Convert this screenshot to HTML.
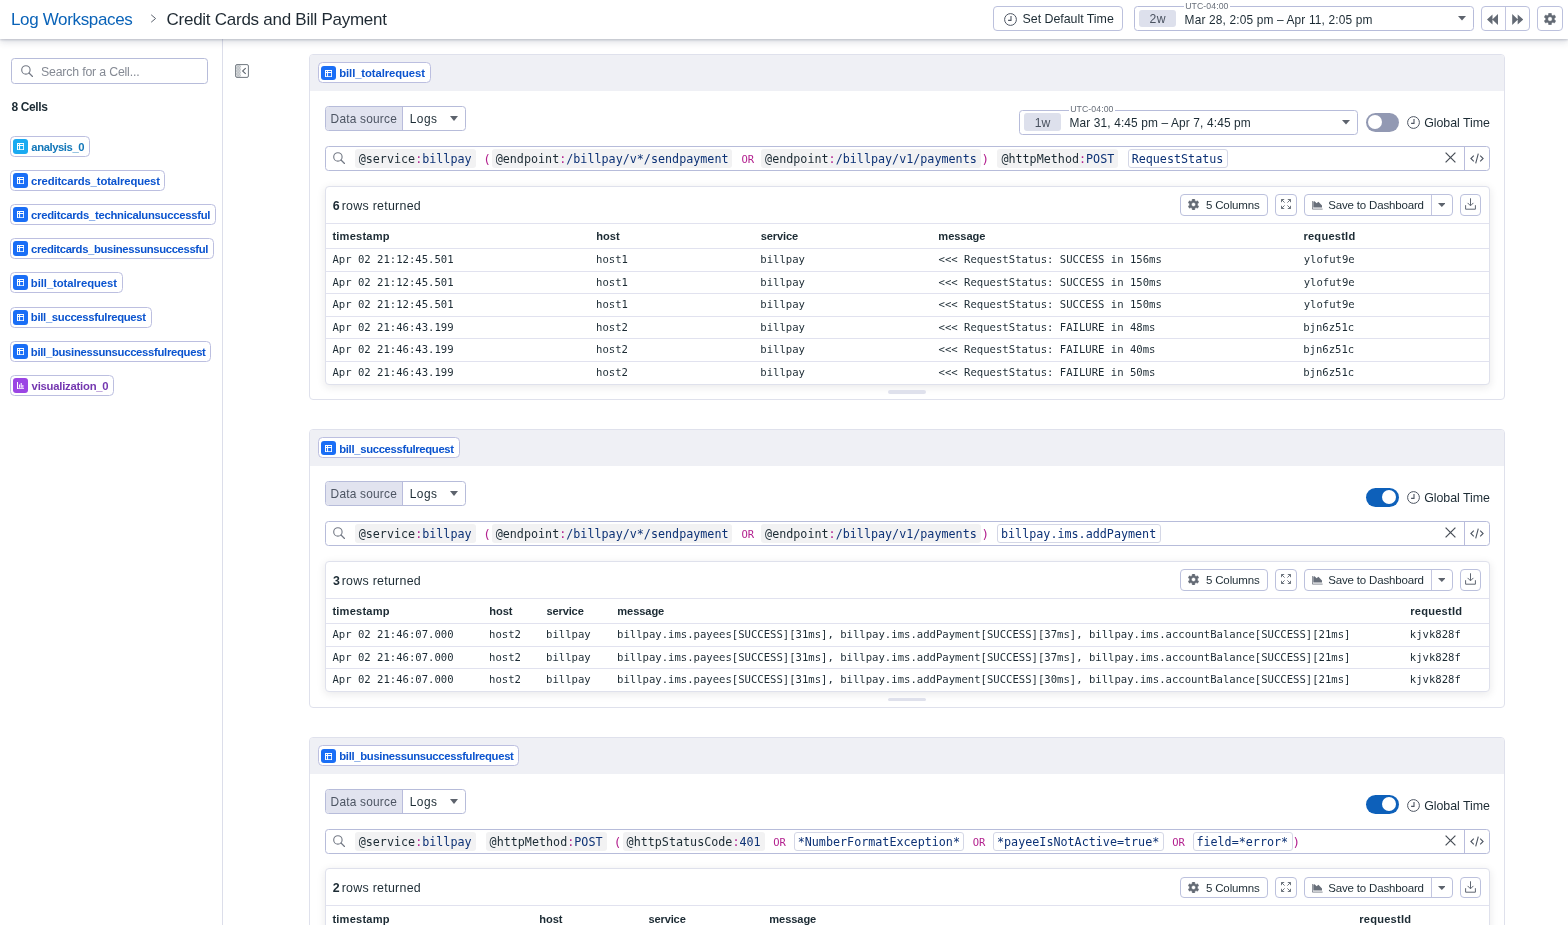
<!DOCTYPE html>
<html lang="en">
<head>
<meta charset="utf-8">
<title>Log Workspaces - Credit Cards and Bill Payment</title>
<style>
*{box-sizing:border-box;margin:0;padding:0}
html,body{width:1568px;height:925px;overflow:hidden;background:#fff}
body{font-family:"Liberation Sans","DejaVu Sans",sans-serif;color:#1c2b34;font-size:13px;position:relative}
.mono{font-family:"DejaVu Sans Mono","Liberation Mono",monospace}
#app{position:absolute;left:0;top:0;width:1568px;height:925px;overflow:hidden;will-change:transform}
.abs{position:absolute}
.t{position:absolute;white-space:pre;color:#1c2b34}
svg{display:block}
b{font-weight:700}
b.mg{font-weight:400;color:#b3218f}
.nv{color:#0d3276}
#hdr{position:absolute;left:0;top:0;width:1568px;height:39px;background:#fff;box-shadow:0 1px 2px rgba(40,50,80,.22),0 3px 7px rgba(40,50,80,.16);z-index:10}
#top{position:absolute;left:0;top:0;z-index:11}
.btn{border:1px solid #bcc1dd;border-radius:4px;background:#fff}
.inp{border:1px solid #b7bcda;border-radius:3.5px;background:#fff}
.tp{border:1px solid #b7bcda;border-radius:3.5px;background:#fff}
#side{position:absolute;left:0;top:39px;width:223px;height:886px;border-right:1px solid #dcdeea;background:#fff}
.chip{border:1px solid #bcbfe0;border-radius:4.5px;background:#fff}
.card{border:1px solid #dfe1ec;border-radius:4px;background:#fff}
.res{border:1px solid #dfe1ec;border-radius:4px;background:#fff;box-shadow:0 2px 8px rgba(30,30,40,.10)}
.hr{background:#e1e2ef}
</style>
</head>
<body>
<div id="app">
<div class="abs card" style="left:309px;top:54px;width:1196px;height:346px;"></div>
<div class="abs " style="left:310px;top:55px;width:1194px;height:35.6px;background:#eff0f5;border-radius:3px 3px 0 0"></div>
<div class="abs chip" style="left:318px;top:62.4px;width:112.5px;height:21px;"></div><div class="abs " style="left:321px;top:65.9px;width:15px;height:14.4px;border-radius:3px;background:#1a6ef6"></div><svg class="abs" style="left:324.8px;top:69.8px" width="7.2" height="7.2" viewBox="0 0 7 7"><path fill="#fff" fill-rule="evenodd" d="M0 0H7V7H0Z M1 1V2H2V1Z M3 1V2H6V1Z M1 3V6H2V3Z M3 3V6H6V3Z"/></svg><span class="t" style="left:339.25px;top:66.00px;font-size:11.3px;line-height:14px;letter-spacing:-0.100px;font-weight:700;color:#0b54cf">bill_totalrequest</span>
<div class="abs inp" style="left:325px;top:106px;width:141px;height:25px;"></div>
<div class="abs " style="left:326px;top:107px;width:76.5px;height:23px;background:#e1e3ef;border-right:1px solid #b9bcdc;border-radius:3px 0 0 3px"></div>
<span class="t" style="left:330.60px;top:111.00px;font-size:11.9px;line-height:16px;letter-spacing:0.210px;color:#4d5563">Data source</span>
<span class="t" style="left:409.80px;top:111.00px;font-size:11.9px;line-height:16px;letter-spacing:0.450px;color:#1c2b34">Logs</span>
<svg class="abs" style="left:450.1px;top:116.4px" width="8" height="5" viewBox="0 0 8 5"><path d="M0 0H8L4.0 5Z" fill="#5d636d"/></svg>
<div class="abs tp" style="left:1019px;top:110px;width:339px;height:25px;"></div><div class="abs " style="left:1024px;top:113.2px;width:37.4px;height:17.8px;border-radius:3px;background:#dde0ec"></div><span class="t" style="left:1034.70px;top:115.00px;font-size:12.2px;line-height:16px;letter-spacing:0.100px;color:#4a5260">1w</span><div class="abs " style="left:1069px;top:110px;width:45.5px;height:2px;background:#fff"></div><span class="t" style="left:1070.15px;top:103.00px;font-size:8.7px;line-height:12px;letter-spacing:0.100px;color:#676e79">UTC-04:00</span><span class="t" style="left:1069.50px;top:115.00px;font-size:11.9px;line-height:16px;letter-spacing:0.132px;color:#1c2b34">Mar 31, 4:45 pm – Apr 7, 4:45 pm</span><svg class="abs" style="left:1341.8px;top:120px" width="8" height="4.6" viewBox="0 0 8 4.6"><path d="M0 0H8L4.0 4.6Z" fill="#5d636d"/></svg>
<div class="abs " style="left:1366px;top:113px;width:33px;height:19px;border-radius:9.5px;background:#9299b3"></div>
<div class="abs " style="left:1368px;top:115.4px;width:14px;height:14px;border-radius:7px;background:#fff"></div>
<svg class="abs" style="left:1406.9px;top:115.9px" width="13" height="13" viewBox="0 0 13 13"><circle cx="6.5" cy="6.5" r="5.9" fill="none" stroke="#4d5562" stroke-width="1"/><path d="M7 2.9V7.4H4.1" fill="none" stroke="#4d5562" stroke-width="1.1"/></svg>
<span class="t" style="left:1424.20px;top:115.00px;font-size:12.4px;line-height:16px;letter-spacing:-0.040px;color:#1c2b34">Global Time</span>
<div class="abs inp" style="left:325px;top:146px;width:1165px;height:25px;"></div>
<svg class="abs" style="left:333.2px;top:151.6px" width="12" height="12" viewBox="0 0 12 12"><circle cx="4.9" cy="4.9" r="4.2" fill="none" stroke="#727884" stroke-width="1.1"/><path d="M8 8L11.5 11.5" stroke="#727884" stroke-width="1.2" stroke-linecap="round"/></svg>
<div class="abs " style="left:354.7px;top:149px;width:121.026768px;height:18.6px;border-radius:3px;background:#f2f2f3"></div><span class="t mono" style="left:358.70px;top:151.00px;font-size:11.73px;line-height:16px">@service<b class="mg">:</b><span class="nv">billpay</span></span><span class="t mono" style="left:483.20px;top:151.00px;font-size:12.6px;line-height:17px;color:#b3218f">(</span><div class="abs " style="left:491.7px;top:149px;width:240.692709px;height:18.6px;border-radius:3px;background:#f2f2f3"></div><span class="t mono" style="left:495.70px;top:151.00px;font-size:11.73px;line-height:16px">@endpoint<b class="mg">:</b><span class="nv">/billpay/v*/sendpayment</span></span><span class="t mono" style="left:741.50px;top:152.00px;font-size:10.5px;line-height:14px;color:#b3218f">OR</span><div class="abs " style="left:761.1px;top:149px;width:219.57519px;height:18.6px;border-radius:3px;background:#f2f2f3"></div><span class="t mono" style="left:765.10px;top:151.00px;font-size:11.73px;line-height:16px">@endpoint<b class="mg">:</b><span class="nv">/billpay/v1/payments</span></span><span class="t mono" style="left:981.45px;top:151.00px;font-size:12.6px;line-height:17px;color:#b3218f">)</span><div class="abs " style="left:997.4px;top:149px;width:121.026768px;height:18.6px;border-radius:3px;background:#f2f2f3"></div><span class="t mono" style="left:1001.40px;top:151.00px;font-size:11.73px;line-height:16px">@httpMethod<b class="mg">:</b><span class="nv">POST</span></span><div class="abs " style="left:1127.8000000000002px;top:149px;width:99.909249px;height:18.6px;border-radius:3px;background:#fff;border:1px solid #d4d7e6"></div><span class="t mono" style="left:1131.65px;top:151.00px;font-size:11.73px;line-height:16px;color:#0d3276">RequestStatus</span>
<svg class="abs" style="left:1445.2px;top:152.3px" width="11" height="11" viewBox="0 0 11 11"><path d="M0.6 0.6L10.4 10.4M10.4 0.6L0.6 10.4" stroke="#474e57" stroke-width="1.25" fill="none"/></svg>
<div class="abs " style="left:1464px;top:147px;width:1px;height:23px;background:#b9bcdc"></div>
<svg class="abs" style="left:1470px;top:152.5px" width="14" height="11" viewBox="0 0 14 11"><path d="M3.8 2.6L0.9 5.5L3.8 8.4M10.2 2.6L13.1 5.5L10.2 8.4M8.3 0.6L5.7 10.4" stroke="#4d5562" stroke-width="1.1" fill="none"/></svg>
<div class="abs res" style="left:325px;top:186px;width:1165px;height:198.6px;"></div>
<span class="t" style="left:332.80px;top:198.00px;font-size:12.4px;line-height:16px;font-weight:700;color:#1c2b34">6</span>
<span class="t" style="left:341.65px;top:198.00px;font-size:12.4px;line-height:16px;letter-spacing:0.279px;color:#1c2b34">rows returned</span>
<div class="abs btn" style="left:1180px;top:194px;width:88px;height:22px;"></div>
<svg class="abs" style="left:1188.3px;top:199.2px" width="11" height="11" viewBox="0 0 12 12"><path d="M7.53 10.07 L7.25 11.87 L4.75 11.87 L4.47 10.07 L3.24 9.36 L1.54 10.02 L0.29 7.85 L1.71 6.71 L1.71 5.29 L0.29 4.15 L1.54 1.98 L3.24 2.64 L4.47 1.93 L4.75 0.13 L7.25 0.13 L7.53 1.93 L8.76 2.64 L10.46 1.98 L11.71 4.15 L10.29 5.29 L10.29 6.71 L11.71 7.85 L10.46 10.02 L8.76 9.36Z M6 3.75 A2.25 2.25 0 1 0 6 8.25 A2.25 2.25 0 1 0 6 3.75Z" fill="#636a74" fill-rule="evenodd" stroke="#636a74" stroke-width="0.5" stroke-linejoin="round"/></svg>
<span class="t" style="left:1205.90px;top:198.00px;font-size:11.5px;line-height:14px;letter-spacing:-0.138px;color:#1c2b34">5 Columns</span>
<div class="abs btn" style="left:1275px;top:194px;width:22px;height:22px;"></div>
<svg class="abs" style="left:1281px;top:199.3px" width="10" height="10" viewBox="0 0 10 10"><path d="M0.5 3.2V0.5H3.2M0.5 0.5L3.6 3.6M6.8 0.5H9.5V3.2M9.5 0.5L6.4 3.6M0.5 6.8V9.5H3.2M0.5 9.5L3.6 6.4M9.5 6.8V9.5H6.8M9.5 9.5L6.4 6.4" stroke="#5f6671" stroke-width="0.9" fill="none"/></svg>
<div class="abs btn" style="left:1304px;top:194px;width:149px;height:22px;"></div>
<svg class="abs" style="left:1312px;top:200.5px" width="11" height="9" viewBox="0 0 11 9"><path d="M0.4 0V8.1H10.6" stroke="#686f7a" stroke-width="0.8" fill="none"/><path d="M1.3 6.6V0.4L2.6 0.2L4.6 2.3L6.4 0.8L10 4.6V6.6Z" fill="#686f7a"/></svg>
<span class="t" style="left:1328.20px;top:198.00px;font-size:11.5px;line-height:14px;letter-spacing:-0.166px;color:#1c2b34">Save to Dashboard</span>
<div class="abs " style="left:1431px;top:195px;width:1px;height:20px;background:#c3c6e0"></div>
<svg class="abs" style="left:1437.8px;top:203.3px" width="7.6" height="4" viewBox="0 0 7.6 4"><path d="M0 0H7.6L3.8 4Z" fill="#5d636d"/></svg>
<div class="abs btn" style="left:1460px;top:194px;width:21px;height:22px;"></div>
<svg class="abs" style="left:1464.9px;top:198.2px" width="11" height="12" viewBox="0 0 11 12"><path d="M5.5 0.3V7.6M2.6 4.9L5.5 7.8L8.4 4.9M0.6 7.2V11.2H10.4V7.2" stroke="#5f6671" stroke-width="1" fill="none"/></svg>
<div class="abs hr" style="left:326px;top:223.2px;width:1163px;height:1px;"></div>
<div class="abs hr" style="left:326px;top:248px;width:1163px;height:1px;"></div>
<span class="t" style="left:332.45px;top:229.00px;font-size:11.1px;line-height:14px;letter-spacing:0.194px;font-weight:700;color:#1c2b34">timestamp</span>
<span class="t" style="left:596.35px;top:229.00px;font-size:11.1px;line-height:14px;letter-spacing:-0.033px;font-weight:700;color:#1c2b34">host</span>
<span class="t" style="left:760.80px;top:229.00px;font-size:11.1px;line-height:14px;letter-spacing:-0.158px;font-weight:700;color:#1c2b34">service</span>
<span class="t" style="left:938.35px;top:229.00px;font-size:11.1px;line-height:14px;letter-spacing:-0.075px;font-weight:700;color:#1c2b34">message</span>
<span class="t" style="left:1303.45px;top:229.00px;font-size:11.1px;line-height:14px;letter-spacing:0.225px;font-weight:700;color:#1c2b34">requestId</span>
<span class="t mono" style="left:332.45px;top:252.00px;font-size:10.6px;line-height:15px;color:#1c2b34">Apr 02 21:12:45.501</span>
<span class="t mono" style="left:596.10px;top:252.00px;font-size:10.6px;line-height:15px;color:#1c2b34">host1</span>
<span class="t mono" style="left:760.30px;top:252.00px;font-size:10.6px;line-height:15px;color:#1c2b34">billpay</span>
<span class="t mono" style="left:938.60px;top:252.00px;font-size:10.6px;line-height:15px;color:#1c2b34">&lt;&lt;&lt; RequestStatus: SUCCESS in 156ms</span>
<span class="t mono" style="left:1303.70px;top:252.00px;font-size:10.6px;line-height:15px;color:#1c2b34">ylofut9e</span>
<div class="abs hr" style="left:326px;top:270.6px;width:1163px;height:1px;"></div>
<span class="t mono" style="left:332.45px;top:275.00px;font-size:10.6px;line-height:15px;color:#1c2b34">Apr 02 21:12:45.501</span>
<span class="t mono" style="left:596.10px;top:275.00px;font-size:10.6px;line-height:15px;color:#1c2b34">host1</span>
<span class="t mono" style="left:760.30px;top:275.00px;font-size:10.6px;line-height:15px;color:#1c2b34">billpay</span>
<span class="t mono" style="left:938.60px;top:275.00px;font-size:10.6px;line-height:15px;color:#1c2b34">&lt;&lt;&lt; RequestStatus: SUCCESS in 150ms</span>
<span class="t mono" style="left:1303.70px;top:275.00px;font-size:10.6px;line-height:15px;color:#1c2b34">ylofut9e</span>
<div class="abs hr" style="left:326px;top:293.2px;width:1163px;height:1px;"></div>
<span class="t mono" style="left:332.45px;top:297.00px;font-size:10.6px;line-height:15px;color:#1c2b34">Apr 02 21:12:45.501</span>
<span class="t mono" style="left:596.10px;top:297.00px;font-size:10.6px;line-height:15px;color:#1c2b34">host1</span>
<span class="t mono" style="left:760.30px;top:297.00px;font-size:10.6px;line-height:15px;color:#1c2b34">billpay</span>
<span class="t mono" style="left:938.60px;top:297.00px;font-size:10.6px;line-height:15px;color:#1c2b34">&lt;&lt;&lt; RequestStatus: SUCCESS in 150ms</span>
<span class="t mono" style="left:1303.70px;top:297.00px;font-size:10.6px;line-height:15px;color:#1c2b34">ylofut9e</span>
<div class="abs hr" style="left:326px;top:315.8px;width:1163px;height:1px;"></div>
<span class="t mono" style="left:332.45px;top:320.00px;font-size:10.6px;line-height:15px;color:#1c2b34">Apr 02 21:46:43.199</span>
<span class="t mono" style="left:596.10px;top:320.00px;font-size:10.6px;line-height:15px;color:#1c2b34">host2</span>
<span class="t mono" style="left:760.30px;top:320.00px;font-size:10.6px;line-height:15px;color:#1c2b34">billpay</span>
<span class="t mono" style="left:938.60px;top:320.00px;font-size:10.6px;line-height:15px;color:#1c2b34">&lt;&lt;&lt; RequestStatus: FAILURE in 48ms</span>
<span class="t mono" style="left:1303.20px;top:320.00px;font-size:10.6px;line-height:15px;color:#1c2b34">bjn6z51c</span>
<div class="abs hr" style="left:326px;top:338.4px;width:1163px;height:1px;"></div>
<span class="t mono" style="left:332.45px;top:342.00px;font-size:10.6px;line-height:15px;color:#1c2b34">Apr 02 21:46:43.199</span>
<span class="t mono" style="left:596.10px;top:342.00px;font-size:10.6px;line-height:15px;color:#1c2b34">host2</span>
<span class="t mono" style="left:760.30px;top:342.00px;font-size:10.6px;line-height:15px;color:#1c2b34">billpay</span>
<span class="t mono" style="left:938.60px;top:342.00px;font-size:10.6px;line-height:15px;color:#1c2b34">&lt;&lt;&lt; RequestStatus: FAILURE in 40ms</span>
<span class="t mono" style="left:1303.20px;top:342.00px;font-size:10.6px;line-height:15px;color:#1c2b34">bjn6z51c</span>
<div class="abs hr" style="left:326px;top:361.0px;width:1163px;height:1px;"></div>
<span class="t mono" style="left:332.45px;top:365.00px;font-size:10.6px;line-height:15px;color:#1c2b34">Apr 02 21:46:43.199</span>
<span class="t mono" style="left:596.10px;top:365.00px;font-size:10.6px;line-height:15px;color:#1c2b34">host2</span>
<span class="t mono" style="left:760.30px;top:365.00px;font-size:10.6px;line-height:15px;color:#1c2b34">billpay</span>
<span class="t mono" style="left:938.60px;top:365.00px;font-size:10.6px;line-height:15px;color:#1c2b34">&lt;&lt;&lt; RequestStatus: FAILURE in 50ms</span>
<span class="t mono" style="left:1303.20px;top:365.00px;font-size:10.6px;line-height:15px;color:#1c2b34">bjn6z51c</span>
<div class="abs " style="left:888px;top:390.2px;width:38px;height:3.6px;border-radius:2px;background:#dfe1ec"></div>
<div class="abs card" style="left:309px;top:429px;width:1196px;height:278.5px;"></div>
<div class="abs " style="left:310px;top:430px;width:1194px;height:35.6px;background:#eff0f5;border-radius:3px 3px 0 0"></div>
<div class="abs chip" style="left:318px;top:437.4px;width:141.6px;height:21px;"></div><div class="abs " style="left:321px;top:440.9px;width:15px;height:14.4px;border-radius:3px;background:#1a6ef6"></div><svg class="abs" style="left:324.8px;top:444.79999999999995px" width="7.2" height="7.2" viewBox="0 0 7 7"><path fill="#fff" fill-rule="evenodd" d="M0 0H7V7H0Z M1 1V2H2V1Z M3 1V2H6V1Z M1 3V6H2V3Z M3 3V6H6V3Z"/></svg><span class="t" style="left:339.25px;top:442.00px;font-size:11.3px;line-height:14px;letter-spacing:-0.333px;font-weight:700;color:#0b54cf">bill_successfulrequest</span>
<div class="abs inp" style="left:325px;top:481px;width:141px;height:25px;"></div>
<div class="abs " style="left:326px;top:482px;width:76.5px;height:23px;background:#e1e3ef;border-right:1px solid #b9bcdc;border-radius:3px 0 0 3px"></div>
<span class="t" style="left:330.60px;top:486.00px;font-size:11.9px;line-height:16px;letter-spacing:0.210px;color:#4d5563">Data source</span>
<span class="t" style="left:409.80px;top:486.00px;font-size:11.9px;line-height:16px;letter-spacing:0.450px;color:#1c2b34">Logs</span>
<svg class="abs" style="left:450.1px;top:491.4px" width="8" height="5" viewBox="0 0 8 5"><path d="M0 0H8L4.0 5Z" fill="#5d636d"/></svg>
<div class="abs " style="left:1366px;top:488px;width:33px;height:19px;border-radius:9.5px;background:#0d60ba"></div>
<div class="abs " style="left:1382.4px;top:490.4px;width:14px;height:14px;border-radius:7px;background:#fff"></div>
<svg class="abs" style="left:1406.9px;top:490.9px" width="13" height="13" viewBox="0 0 13 13"><circle cx="6.5" cy="6.5" r="5.9" fill="none" stroke="#4d5562" stroke-width="1"/><path d="M7 2.9V7.4H4.1" fill="none" stroke="#4d5562" stroke-width="1.1"/></svg>
<span class="t" style="left:1424.20px;top:490.00px;font-size:12.4px;line-height:16px;letter-spacing:-0.040px;color:#1c2b34">Global Time</span>
<div class="abs inp" style="left:325px;top:521px;width:1165px;height:25px;"></div>
<svg class="abs" style="left:333.2px;top:526.6px" width="12" height="12" viewBox="0 0 12 12"><circle cx="4.9" cy="4.9" r="4.2" fill="none" stroke="#727884" stroke-width="1.1"/><path d="M8 8L11.5 11.5" stroke="#727884" stroke-width="1.2" stroke-linecap="round"/></svg>
<div class="abs " style="left:354.7px;top:524px;width:121.026768px;height:18.6px;border-radius:3px;background:#f2f2f3"></div><span class="t mono" style="left:358.70px;top:526.00px;font-size:11.73px;line-height:16px">@service<b class="mg">:</b><span class="nv">billpay</span></span><span class="t mono" style="left:483.20px;top:526.00px;font-size:12.6px;line-height:17px;color:#b3218f">(</span><div class="abs " style="left:491.7px;top:524px;width:240.692709px;height:18.6px;border-radius:3px;background:#f2f2f3"></div><span class="t mono" style="left:495.70px;top:526.00px;font-size:11.73px;line-height:16px">@endpoint<b class="mg">:</b><span class="nv">/billpay/v*/sendpayment</span></span><span class="t mono" style="left:741.50px;top:527.00px;font-size:10.5px;line-height:14px;color:#b3218f">OR</span><div class="abs " style="left:761.1px;top:524px;width:219.57519px;height:18.6px;border-radius:3px;background:#f2f2f3"></div><span class="t mono" style="left:765.10px;top:526.00px;font-size:11.73px;line-height:16px">@endpoint<b class="mg">:</b><span class="nv">/billpay/v1/payments</span></span><span class="t mono" style="left:981.45px;top:526.00px;font-size:12.6px;line-height:17px;color:#b3218f">)</span><div class="abs " style="left:997.4px;top:524px;width:163.261806px;height:18.6px;border-radius:3px;background:#fff;border:1px solid #d4d7e6"></div><span class="t mono" style="left:1001.00px;top:526.00px;font-size:11.73px;line-height:16px;color:#0d3276">billpay.ims.addPayment</span>
<svg class="abs" style="left:1445.2px;top:527.3px" width="11" height="11" viewBox="0 0 11 11"><path d="M0.6 0.6L10.4 10.4M10.4 0.6L0.6 10.4" stroke="#474e57" stroke-width="1.25" fill="none"/></svg>
<div class="abs " style="left:1464px;top:522px;width:1px;height:23px;background:#b9bcdc"></div>
<svg class="abs" style="left:1470px;top:527.5px" width="14" height="11" viewBox="0 0 14 11"><path d="M3.8 2.6L0.9 5.5L3.8 8.4M10.2 2.6L13.1 5.5L10.2 8.4M8.3 0.6L5.7 10.4" stroke="#4d5562" stroke-width="1.1" fill="none"/></svg>
<div class="abs res" style="left:325px;top:561px;width:1165px;height:130.8px;"></div>
<span class="t" style="left:333.05px;top:573.00px;font-size:12.4px;line-height:16px;font-weight:700;color:#1c2b34">3</span>
<span class="t" style="left:341.65px;top:573.00px;font-size:12.4px;line-height:16px;letter-spacing:0.279px;color:#1c2b34">rows returned</span>
<div class="abs btn" style="left:1180px;top:569px;width:88px;height:22px;"></div>
<svg class="abs" style="left:1188.3px;top:574.2px" width="11" height="11" viewBox="0 0 12 12"><path d="M7.53 10.07 L7.25 11.87 L4.75 11.87 L4.47 10.07 L3.24 9.36 L1.54 10.02 L0.29 7.85 L1.71 6.71 L1.71 5.29 L0.29 4.15 L1.54 1.98 L3.24 2.64 L4.47 1.93 L4.75 0.13 L7.25 0.13 L7.53 1.93 L8.76 2.64 L10.46 1.98 L11.71 4.15 L10.29 5.29 L10.29 6.71 L11.71 7.85 L10.46 10.02 L8.76 9.36Z M6 3.75 A2.25 2.25 0 1 0 6 8.25 A2.25 2.25 0 1 0 6 3.75Z" fill="#636a74" fill-rule="evenodd" stroke="#636a74" stroke-width="0.5" stroke-linejoin="round"/></svg>
<span class="t" style="left:1205.90px;top:573.00px;font-size:11.5px;line-height:14px;letter-spacing:-0.138px;color:#1c2b34">5 Columns</span>
<div class="abs btn" style="left:1275px;top:569px;width:22px;height:22px;"></div>
<svg class="abs" style="left:1281px;top:574.3px" width="10" height="10" viewBox="0 0 10 10"><path d="M0.5 3.2V0.5H3.2M0.5 0.5L3.6 3.6M6.8 0.5H9.5V3.2M9.5 0.5L6.4 3.6M0.5 6.8V9.5H3.2M0.5 9.5L3.6 6.4M9.5 6.8V9.5H6.8M9.5 9.5L6.4 6.4" stroke="#5f6671" stroke-width="0.9" fill="none"/></svg>
<div class="abs btn" style="left:1304px;top:569px;width:149px;height:22px;"></div>
<svg class="abs" style="left:1312px;top:575.5px" width="11" height="9" viewBox="0 0 11 9"><path d="M0.4 0V8.1H10.6" stroke="#686f7a" stroke-width="0.8" fill="none"/><path d="M1.3 6.6V0.4L2.6 0.2L4.6 2.3L6.4 0.8L10 4.6V6.6Z" fill="#686f7a"/></svg>
<span class="t" style="left:1328.20px;top:573.00px;font-size:11.5px;line-height:14px;letter-spacing:-0.166px;color:#1c2b34">Save to Dashboard</span>
<div class="abs " style="left:1431px;top:570px;width:1px;height:20px;background:#c3c6e0"></div>
<svg class="abs" style="left:1437.8px;top:578.3px" width="7.6" height="4" viewBox="0 0 7.6 4"><path d="M0 0H7.6L3.8 4Z" fill="#5d636d"/></svg>
<div class="abs btn" style="left:1460px;top:569px;width:21px;height:22px;"></div>
<svg class="abs" style="left:1464.9px;top:573.2px" width="11" height="12" viewBox="0 0 11 12"><path d="M5.5 0.3V7.6M2.6 4.9L5.5 7.8L8.4 4.9M0.6 7.2V11.2H10.4V7.2" stroke="#5f6671" stroke-width="1" fill="none"/></svg>
<div class="abs hr" style="left:326px;top:598.2px;width:1163px;height:1px;"></div>
<div class="abs hr" style="left:326px;top:623px;width:1163px;height:1px;"></div>
<span class="t" style="left:332.45px;top:604.00px;font-size:11.1px;line-height:14px;letter-spacing:0.194px;font-weight:700;color:#1c2b34">timestamp</span>
<span class="t" style="left:489.25px;top:604.00px;font-size:11.1px;line-height:14px;letter-spacing:-0.033px;font-weight:700;color:#1c2b34">host</span>
<span class="t" style="left:546.50px;top:604.00px;font-size:11.1px;line-height:14px;letter-spacing:-0.158px;font-weight:700;color:#1c2b34">service</span>
<span class="t" style="left:617.25px;top:604.00px;font-size:11.1px;line-height:14px;letter-spacing:-0.075px;font-weight:700;color:#1c2b34">message</span>
<span class="t" style="left:1410.25px;top:604.00px;font-size:11.1px;line-height:14px;letter-spacing:0.225px;font-weight:700;color:#1c2b34">requestId</span>
<span class="t mono" style="left:332.45px;top:627.00px;font-size:10.6px;line-height:15px;color:#1c2b34">Apr 02 21:46:07.000</span>
<span class="t mono" style="left:489.00px;top:627.00px;font-size:10.6px;line-height:15px;color:#1c2b34">host2</span>
<span class="t mono" style="left:546.00px;top:627.00px;font-size:10.6px;line-height:15px;color:#1c2b34">billpay</span>
<span class="t mono" style="left:617.00px;top:627.00px;font-size:10.6px;line-height:15px;color:#1c2b34">billpay.ims.payees[SUCCESS][31ms], billpay.ims.addPayment[SUCCESS][37ms], billpay.ims.accountBalance[SUCCESS][21ms]</span>
<span class="t mono" style="left:1409.75px;top:627.00px;font-size:10.6px;line-height:15px;color:#1c2b34">kjvk828f</span>
<div class="abs hr" style="left:326px;top:645.6px;width:1163px;height:1px;"></div>
<span class="t mono" style="left:332.45px;top:650.00px;font-size:10.6px;line-height:15px;color:#1c2b34">Apr 02 21:46:07.000</span>
<span class="t mono" style="left:489.00px;top:650.00px;font-size:10.6px;line-height:15px;color:#1c2b34">host2</span>
<span class="t mono" style="left:546.00px;top:650.00px;font-size:10.6px;line-height:15px;color:#1c2b34">billpay</span>
<span class="t mono" style="left:617.00px;top:650.00px;font-size:10.6px;line-height:15px;color:#1c2b34">billpay.ims.payees[SUCCESS][31ms], billpay.ims.addPayment[SUCCESS][37ms], billpay.ims.accountBalance[SUCCESS][21ms]</span>
<span class="t mono" style="left:1409.75px;top:650.00px;font-size:10.6px;line-height:15px;color:#1c2b34">kjvk828f</span>
<div class="abs hr" style="left:326px;top:668.2px;width:1163px;height:1px;"></div>
<span class="t mono" style="left:332.45px;top:672.00px;font-size:10.6px;line-height:15px;color:#1c2b34">Apr 02 21:46:07.000</span>
<span class="t mono" style="left:489.00px;top:672.00px;font-size:10.6px;line-height:15px;color:#1c2b34">host2</span>
<span class="t mono" style="left:546.00px;top:672.00px;font-size:10.6px;line-height:15px;color:#1c2b34">billpay</span>
<span class="t mono" style="left:617.00px;top:672.00px;font-size:10.6px;line-height:15px;color:#1c2b34">billpay.ims.payees[SUCCESS][31ms], billpay.ims.addPayment[SUCCESS][30ms], billpay.ims.accountBalance[SUCCESS][21ms]</span>
<span class="t mono" style="left:1409.75px;top:672.00px;font-size:10.6px;line-height:15px;color:#1c2b34">kjvk828f</span>
<div class="abs " style="left:888px;top:697.7px;width:38px;height:3.6px;border-radius:2px;background:#dfe1ec"></div>
<div class="abs card" style="left:309px;top:737px;width:1196px;height:256px;"></div>
<div class="abs " style="left:310px;top:738px;width:1194px;height:35.6px;background:#eff0f5;border-radius:3px 3px 0 0"></div>
<div class="abs chip" style="left:318px;top:745.4px;width:200.6px;height:21px;"></div><div class="abs " style="left:321px;top:748.9px;width:15px;height:14.4px;border-radius:3px;background:#1a6ef6"></div><svg class="abs" style="left:324.8px;top:752.8px" width="7.2" height="7.2" viewBox="0 0 7 7"><path fill="#fff" fill-rule="evenodd" d="M0 0H7V7H0Z M1 1V2H2V1Z M3 1V2H6V1Z M1 3V6H2V3Z M3 3V6H6V3Z"/></svg><span class="t" style="left:339.25px;top:749.00px;font-size:11.3px;line-height:14px;letter-spacing:-0.321px;font-weight:700;color:#0b54cf">bill_businessunsuccessfulrequest</span>
<div class="abs inp" style="left:325px;top:789px;width:141px;height:25px;"></div>
<div class="abs " style="left:326px;top:790px;width:76.5px;height:23px;background:#e1e3ef;border-right:1px solid #b9bcdc;border-radius:3px 0 0 3px"></div>
<span class="t" style="left:330.60px;top:794.00px;font-size:11.9px;line-height:16px;letter-spacing:0.210px;color:#4d5563">Data source</span>
<span class="t" style="left:409.80px;top:794.00px;font-size:11.9px;line-height:16px;letter-spacing:0.450px;color:#1c2b34">Logs</span>
<svg class="abs" style="left:450.1px;top:799.4px" width="8" height="5" viewBox="0 0 8 5"><path d="M0 0H8L4.0 5Z" fill="#5d636d"/></svg>
<div class="abs " style="left:1366px;top:795px;width:33px;height:19px;border-radius:9.5px;background:#0d60ba"></div>
<div class="abs " style="left:1382.4px;top:797.4px;width:14px;height:14px;border-radius:7px;background:#fff"></div>
<svg class="abs" style="left:1406.9px;top:798.9px" width="13" height="13" viewBox="0 0 13 13"><circle cx="6.5" cy="6.5" r="5.9" fill="none" stroke="#4d5562" stroke-width="1"/><path d="M7 2.9V7.4H4.1" fill="none" stroke="#4d5562" stroke-width="1.1"/></svg>
<span class="t" style="left:1424.20px;top:798.00px;font-size:12.4px;line-height:16px;letter-spacing:-0.040px;color:#1c2b34">Global Time</span>
<div class="abs inp" style="left:325px;top:829px;width:1165px;height:25px;"></div>
<svg class="abs" style="left:333.2px;top:834.6px" width="12" height="12" viewBox="0 0 12 12"><circle cx="4.9" cy="4.9" r="4.2" fill="none" stroke="#727884" stroke-width="1.1"/><path d="M8 8L11.5 11.5" stroke="#727884" stroke-width="1.2" stroke-linecap="round"/></svg>
<div class="abs " style="left:354.7px;top:832px;width:121.026768px;height:18.6px;border-radius:3px;background:#f2f2f3"></div><span class="t mono" style="left:358.70px;top:834.00px;font-size:11.73px;line-height:16px">@service<b class="mg">:</b><span class="nv">billpay</span></span><div class="abs " style="left:485.59999999999997px;top:832px;width:121.026768px;height:18.6px;border-radius:3px;background:#f2f2f3"></div><span class="t mono" style="left:489.60px;top:834.00px;font-size:11.73px;line-height:16px">@httpMethod<b class="mg">:</b><span class="nv">POST</span></span><span class="t mono" style="left:613.70px;top:834.00px;font-size:12.6px;line-height:17px;color:#b3218f">(</span><div class="abs " style="left:622.6px;top:832px;width:142.144287px;height:18.6px;border-radius:3px;background:#f2f2f3"></div><span class="t mono" style="left:626.60px;top:834.00px;font-size:11.73px;line-height:16px">@httpStatusCode<b class="mg">:</b><span class="nv">401</span></span><span class="t mono" style="left:773.30px;top:835.00px;font-size:10.5px;line-height:14px;color:#b3218f">OR</span><div class="abs " style="left:794.1px;top:832px;width:170.300979px;height:18.6px;border-radius:3px;background:#fff;border:1px solid #d4d7e6"></div><span class="t mono" style="left:797.70px;top:834.00px;font-size:11.73px;line-height:16px;color:#0d3276">*NumberFormatException*</span><span class="t mono" style="left:972.80px;top:835.00px;font-size:10.5px;line-height:14px;color:#b3218f">OR</span><div class="abs " style="left:993.4px;top:832px;width:170.300979px;height:18.6px;border-radius:3px;background:#fff;border:1px solid #d4d7e6"></div><span class="t mono" style="left:997.00px;top:834.00px;font-size:11.73px;line-height:16px;color:#0d3276">*payeeIsNotActive=true*</span><span class="t mono" style="left:1172.20px;top:835.00px;font-size:10.5px;line-height:14px;color:#b3218f">OR</span><div class="abs " style="left:1192.8000000000002px;top:832px;width:99.909249px;height:18.6px;border-radius:3px;background:#fff;border:1px solid #d4d7e6"></div><span class="t mono" style="left:1196.40px;top:834.00px;font-size:11.73px;line-height:16px;color:#0d3276">field=*error*</span><span class="t mono" style="left:1292.45px;top:834.00px;font-size:12.6px;line-height:17px;color:#b3218f">)</span>
<svg class="abs" style="left:1445.2px;top:835.3px" width="11" height="11" viewBox="0 0 11 11"><path d="M0.6 0.6L10.4 10.4M10.4 0.6L0.6 10.4" stroke="#474e57" stroke-width="1.25" fill="none"/></svg>
<div class="abs " style="left:1464px;top:830px;width:1px;height:23px;background:#b9bcdc"></div>
<svg class="abs" style="left:1470px;top:835.5px" width="14" height="11" viewBox="0 0 14 11"><path d="M3.8 2.6L0.9 5.5L3.8 8.4M10.2 2.6L13.1 5.5L10.2 8.4M8.3 0.6L5.7 10.4" stroke="#4d5562" stroke-width="1.1" fill="none"/></svg>
<div class="abs res" style="left:325px;top:868px;width:1165px;height:109.2px;"></div>
<span class="t" style="left:332.80px;top:880.00px;font-size:12.4px;line-height:16px;font-weight:700;color:#1c2b34">2</span>
<span class="t" style="left:341.65px;top:880.00px;font-size:12.4px;line-height:16px;letter-spacing:0.279px;color:#1c2b34">rows returned</span>
<div class="abs btn" style="left:1180px;top:877px;width:88px;height:21px;"></div>
<svg class="abs" style="left:1188.3px;top:882.2px" width="11" height="11" viewBox="0 0 12 12"><path d="M7.53 10.07 L7.25 11.87 L4.75 11.87 L4.47 10.07 L3.24 9.36 L1.54 10.02 L0.29 7.85 L1.71 6.71 L1.71 5.29 L0.29 4.15 L1.54 1.98 L3.24 2.64 L4.47 1.93 L4.75 0.13 L7.25 0.13 L7.53 1.93 L8.76 2.64 L10.46 1.98 L11.71 4.15 L10.29 5.29 L10.29 6.71 L11.71 7.85 L10.46 10.02 L8.76 9.36Z M6 3.75 A2.25 2.25 0 1 0 6 8.25 A2.25 2.25 0 1 0 6 3.75Z" fill="#636a74" fill-rule="evenodd" stroke="#636a74" stroke-width="0.5" stroke-linejoin="round"/></svg>
<span class="t" style="left:1205.90px;top:881.00px;font-size:11.5px;line-height:14px;letter-spacing:-0.138px;color:#1c2b34">5 Columns</span>
<div class="abs btn" style="left:1275px;top:877px;width:22px;height:21px;"></div>
<svg class="abs" style="left:1281px;top:882.3px" width="10" height="10" viewBox="0 0 10 10"><path d="M0.5 3.2V0.5H3.2M0.5 0.5L3.6 3.6M6.8 0.5H9.5V3.2M9.5 0.5L6.4 3.6M0.5 6.8V9.5H3.2M0.5 9.5L3.6 6.4M9.5 6.8V9.5H6.8M9.5 9.5L6.4 6.4" stroke="#5f6671" stroke-width="0.9" fill="none"/></svg>
<div class="abs btn" style="left:1304px;top:877px;width:149px;height:21px;"></div>
<svg class="abs" style="left:1312px;top:883.5px" width="11" height="9" viewBox="0 0 11 9"><path d="M0.4 0V8.1H10.6" stroke="#686f7a" stroke-width="0.8" fill="none"/><path d="M1.3 6.6V0.4L2.6 0.2L4.6 2.3L6.4 0.8L10 4.6V6.6Z" fill="#686f7a"/></svg>
<span class="t" style="left:1328.20px;top:881.00px;font-size:11.5px;line-height:14px;letter-spacing:-0.166px;color:#1c2b34">Save to Dashboard</span>
<div class="abs " style="left:1431px;top:878px;width:1px;height:19px;background:#c3c6e0"></div>
<svg class="abs" style="left:1437.8px;top:886.3px" width="7.6" height="4" viewBox="0 0 7.6 4"><path d="M0 0H7.6L3.8 4Z" fill="#5d636d"/></svg>
<div class="abs btn" style="left:1460px;top:877px;width:21px;height:21px;"></div>
<svg class="abs" style="left:1464.9px;top:881.2px" width="11" height="12" viewBox="0 0 11 12"><path d="M5.5 0.3V7.6M2.6 4.9L5.5 7.8L8.4 4.9M0.6 7.2V11.2H10.4V7.2" stroke="#5f6671" stroke-width="1" fill="none"/></svg>
<div class="abs hr" style="left:326px;top:905.2px;width:1163px;height:1px;"></div>
<div class="abs hr" style="left:326px;top:931px;width:1163px;height:1px;"></div>
<span class="t" style="left:332.45px;top:912.00px;font-size:11.1px;line-height:14px;letter-spacing:0.194px;font-weight:700;color:#1c2b34">timestamp</span>
<span class="t" style="left:539.25px;top:912.00px;font-size:11.1px;line-height:14px;letter-spacing:-0.033px;font-weight:700;color:#1c2b34">host</span>
<span class="t" style="left:648.50px;top:912.00px;font-size:11.1px;line-height:14px;letter-spacing:-0.158px;font-weight:700;color:#1c2b34">service</span>
<span class="t" style="left:769.25px;top:912.00px;font-size:11.1px;line-height:14px;letter-spacing:-0.075px;font-weight:700;color:#1c2b34">message</span>
<span class="t" style="left:1359.25px;top:912.00px;font-size:11.1px;line-height:14px;letter-spacing:0.225px;font-weight:700;color:#1c2b34">requestId</span>
<span class="t mono" style="left:332.45px;top:935.00px;font-size:10.6px;line-height:15px;color:#1c2b34">Apr 02 21:46:43.199</span>
<span class="t mono" style="left:539.00px;top:935.00px;font-size:10.6px;line-height:15px;color:#1c2b34">host2</span>
<span class="t mono" style="left:648.00px;top:935.00px;font-size:10.6px;line-height:15px;color:#1c2b34">billpay</span>
<span class="t mono" style="left:1359.00px;top:935.00px;font-size:10.6px;line-height:15px;color:#1c2b34">bjn6z51c</span>
<div class="abs hr" style="left:326px;top:953.6px;width:1163px;height:1px;"></div>
<span class="t mono" style="left:332.45px;top:958.00px;font-size:10.6px;line-height:15px;color:#1c2b34">Apr 02 21:46:43.199</span>
<span class="t mono" style="left:539.00px;top:958.00px;font-size:10.6px;line-height:15px;color:#1c2b34">host2</span>
<span class="t mono" style="left:648.00px;top:958.00px;font-size:10.6px;line-height:15px;color:#1c2b34">billpay</span>
<span class="t mono" style="left:1359.00px;top:958.00px;font-size:10.6px;line-height:15px;color:#1c2b34">bjn6z51c</span>
<div class="abs " style="left:888px;top:983.2px;width:38px;height:3.6px;border-radius:2px;background:#dfe1ec"></div>
<div id="side"></div>
<div class="abs inp" style="left:11px;top:58px;width:197px;height:26px;"></div>
<svg class="abs" style="left:20.8px;top:65.2px" width="12" height="12" viewBox="0 0 12 12"><circle cx="4.9" cy="4.9" r="4.2" fill="none" stroke="#727884" stroke-width="1.1"/><path d="M8 8L11.5 11.5" stroke="#727884" stroke-width="1.2" stroke-linecap="round"/></svg>
<span class="t" style="left:41.00px;top:64.00px;font-size:12.3px;line-height:16px;letter-spacing:-0.171px;color:#858a94">Search for a Cell...</span>
<span class="t" style="left:11.40px;top:99.00px;font-size:12px;line-height:16px;letter-spacing:-0.342px;font-weight:700;color:#1c2b34">8 Cells</span>
<div class="abs chip" style="left:10px;top:136px;width:79.6px;height:21px;"></div><div class="abs " style="left:13px;top:139px;width:15px;height:15px;border-radius:3px;background:#1aaaf1"></div><svg class="abs" style="left:16.8px;top:142.9px" width="7.2" height="7.2" viewBox="0 0 7 7"><path fill="#fff" fill-rule="evenodd" d="M0 0H7V7H0Z M1 1V2H2V1Z M3 1V2H6V1Z M1 3V6H2V3Z M3 3V6H6V3Z"/></svg><span class="t" style="left:31.35px;top:140.00px;font-size:11.3px;line-height:14px;letter-spacing:-0.444px;font-weight:700;color:#1277b9">analysis_0</span>
<div class="abs chip" style="left:10px;top:170.2px;width:154.5px;height:21px;"></div><div class="abs " style="left:13px;top:173.2px;width:15px;height:15px;border-radius:3px;background:#1a6ef6"></div><svg class="abs" style="left:16.8px;top:177.1px" width="7.2" height="7.2" viewBox="0 0 7 7"><path fill="#fff" fill-rule="evenodd" d="M0 0H7V7H0Z M1 1V2H2V1Z M3 1V2H6V1Z M1 3V6H2V3Z M3 3V6H6V3Z"/></svg><span class="t" style="left:31.10px;top:174.00px;font-size:11.3px;line-height:14px;letter-spacing:-0.128px;font-weight:700;color:#0b54cf">creditcards_totalrequest</span>
<div class="abs chip" style="left:10px;top:204.2px;width:205.6px;height:21px;"></div><div class="abs " style="left:13px;top:207.2px;width:15px;height:15px;border-radius:3px;background:#1a6ef6"></div><svg class="abs" style="left:16.8px;top:211.1px" width="7.2" height="7.2" viewBox="0 0 7 7"><path fill="#fff" fill-rule="evenodd" d="M0 0H7V7H0Z M1 1V2H2V1Z M3 1V2H6V1Z M1 3V6H2V3Z M3 3V6H6V3Z"/></svg><span class="t" style="left:31.10px;top:208.00px;font-size:11.3px;line-height:14px;letter-spacing:-0.281px;font-weight:700;color:#0b54cf">creditcards_technicalunsuccessful</span>
<div class="abs chip" style="left:10px;top:238.2px;width:203.6px;height:21px;"></div><div class="abs " style="left:13px;top:241.2px;width:15px;height:15px;border-radius:3px;background:#1a6ef6"></div><svg class="abs" style="left:16.8px;top:245.1px" width="7.2" height="7.2" viewBox="0 0 7 7"><path fill="#fff" fill-rule="evenodd" d="M0 0H7V7H0Z M1 1V2H2V1Z M3 1V2H6V1Z M1 3V6H2V3Z M3 3V6H6V3Z"/></svg><span class="t" style="left:31.10px;top:242.00px;font-size:11.3px;line-height:14px;letter-spacing:-0.355px;font-weight:700;color:#0b54cf">creditcards_businessunsuccessful</span>
<div class="abs chip" style="left:10px;top:272.3px;width:112.5px;height:21px;"></div><div class="abs " style="left:13px;top:275.3px;width:15px;height:15px;border-radius:3px;background:#1a6ef6"></div><svg class="abs" style="left:16.8px;top:279.2px" width="7.2" height="7.2" viewBox="0 0 7 7"><path fill="#fff" fill-rule="evenodd" d="M0 0H7V7H0Z M1 1V2H2V1Z M3 1V2H6V1Z M1 3V6H2V3Z M3 3V6H6V3Z"/></svg><span class="t" style="left:30.85px;top:276.00px;font-size:11.3px;line-height:14px;letter-spacing:-0.069px;font-weight:700;color:#0b54cf">bill_totalrequest</span>
<div class="abs chip" style="left:10px;top:306.6px;width:141.6px;height:21px;"></div><div class="abs " style="left:13px;top:309.6px;width:15px;height:15px;border-radius:3px;background:#1a6ef6"></div><svg class="abs" style="left:16.8px;top:313.5px" width="7.2" height="7.2" viewBox="0 0 7 7"><path fill="#fff" fill-rule="evenodd" d="M0 0H7V7H0Z M1 1V2H2V1Z M3 1V2H6V1Z M1 3V6H2V3Z M3 3V6H6V3Z"/></svg><span class="t" style="left:30.85px;top:310.00px;font-size:11.3px;line-height:14px;letter-spacing:-0.314px;font-weight:700;color:#0b54cf">bill_successfulrequest</span>
<div class="abs chip" style="left:10px;top:341px;width:200.6px;height:21px;"></div><div class="abs " style="left:13px;top:344px;width:15px;height:15px;border-radius:3px;background:#1a6ef6"></div><svg class="abs" style="left:16.8px;top:347.9px" width="7.2" height="7.2" viewBox="0 0 7 7"><path fill="#fff" fill-rule="evenodd" d="M0 0H7V7H0Z M1 1V2H2V1Z M3 1V2H6V1Z M1 3V6H2V3Z M3 3V6H6V3Z"/></svg><span class="t" style="left:30.85px;top:345.00px;font-size:11.3px;line-height:14px;letter-spacing:-0.308px;font-weight:700;color:#0b54cf">bill_businessunsuccessfulrequest</span>
<div class="abs chip" style="left:10px;top:375.2px;width:103.8px;height:21px;"></div><div class="abs " style="left:13px;top:378.2px;width:15px;height:15px;border-radius:3px;background:#9b45e4"></div><svg class="abs" style="left:16.8px;top:382.09999999999997px" width="7.2" height="7.2" viewBox="0 0 7 7"><path fill="none" stroke="#fff" stroke-width="1" d="M0.5 0V6.5H7"/><path fill="#fff" d="M2 2.5H3V5.5H2Z M3.6 1H4.6V5.5H3.6Z M5.2 3H6.2V5.5H5.2Z"/></svg><span class="t" style="left:31.60px;top:379.00px;font-size:11.3px;line-height:14px;letter-spacing:-0.236px;font-weight:700;color:#7437b0">visualization_0</span>
<svg class="abs" style="left:235px;top:64px" width="14" height="14" viewBox="0 0 14 14"><rect x="0.6" y="0.6" width="12.8" height="12.8" rx="1.4" fill="#fff" stroke="#687078" stroke-width="0.95"/><path d="M1.1 2.1L2.1 1.1M1.1 3.6L3.6 1.1M1.1 5.1L5.1 1.1M1.1 6.6L5.7 2.0M1.1 8.1L5.7 3.5M1.1 9.6L5.7 5.0M1.1 11.1L5.7 6.5M1.1 12.6L5.7 8.0M2.3 12.9L5.7 9.5M3.8 12.9L5.7 11.0M5.3 12.9L5.7 12.5M1.1 11.9L2.1 12.9M1.1 10.4L3.6 12.9M1.1 8.9L5.1 12.9M1.1 7.4L5.7 12.0M1.1 5.9L5.7 10.5M1.1 4.4L5.7 9.0M1.1 2.9L5.7 7.5M1.1 1.4L5.7 6.0M2.3 1.1L5.7 4.5M3.8 1.1L5.7 3.0M5.3 1.1L5.7 1.5" fill="none" stroke="#9aa0a7" stroke-width="0.5"/><path d="M10.7 4.1L7.6 7L10.7 9.9" fill="none" stroke="#5f666f" stroke-width="1.05"/></svg>
<div id="hdr"></div>
<div id="top">
<span class="t" style="left:10.90px;top:9.00px;font-size:17px;line-height:21px;letter-spacing:-0.335px;color:#0a63b8">Log Workspaces</span>
<svg class="abs" style="left:150px;top:13.5px" width="7" height="9" viewBox="0 0 7 9"><path d="M1.2 0.8L5.6 4.5L1.2 8.2" fill="none" stroke="#5a616d" stroke-width="1"/></svg>
<span class="t" style="left:166.55px;top:9.00px;font-size:17px;line-height:21px;letter-spacing:-0.263px;color:#1f2a33">Credit Cards and Bill Payment</span>
<div class="abs btn" style="left:993px;top:6px;width:130px;height:25px;"></div>
<svg class="abs" style="left:1003.5px;top:12.5px" width="13" height="13" viewBox="0 0 13 13"><circle cx="6.5" cy="6.5" r="5.9" fill="none" stroke="#4d5562" stroke-width="1"/><path d="M7 2.9V7.4H4.1" fill="none" stroke="#4d5562" stroke-width="1.1"/></svg>
<span class="t" style="left:1022.55px;top:11.00px;font-size:12.4px;line-height:16px;letter-spacing:-0.023px;color:#1c2b34">Set Default Time</span>
<div class="abs tp" style="left:1134px;top:6px;width:340px;height:25px;"></div><div class="abs " style="left:1139px;top:10.2px;width:37.4px;height:16.8px;border-radius:3px;background:#dde0ec"></div><span class="t" style="left:1149.40px;top:11.00px;font-size:12.2px;line-height:16px;letter-spacing:0.700px;color:#4a5260">2w</span><div class="abs " style="left:1184px;top:6px;width:45.5px;height:2px;background:#fff"></div><span class="t" style="left:1185.15px;top:0.00px;font-size:8.7px;line-height:12px;letter-spacing:0.100px;color:#676e79">UTC-04:00</span><span class="t" style="left:1184.60px;top:12.00px;font-size:11.9px;line-height:16px;letter-spacing:0.153px;color:#1c2b34">Mar 28, 2:05 pm – Apr 11, 2:05 pm</span><svg class="abs" style="left:1457.8px;top:16px" width="8" height="4.6" viewBox="0 0 8 4.6"><path d="M0 0H8L4.0 4.6Z" fill="#5d636d"/></svg>
<div class="abs btn" style="left:1481px;top:6px;width:49px;height:25px;"></div>
<div class="abs " style="left:1505px;top:7px;width:1px;height:23px;background:#c3c6e0"></div>
<svg class="abs" style="left:1487px;top:13.6px" width="11.2" height="11" viewBox="0 0 11.2 11"><path d="M5.5 0.6V10.4L0 5.5ZM11 0V11L5.3 5.5Z" fill="#636a74"/></svg>
<svg class="abs" style="left:1512px;top:13.6px" width="11.2" height="11" viewBox="0 0 11.2 11"><path d="M0.2 0V11L5.9 5.5ZM5.7 0.6V10.4L11.2 5.5Z" fill="#636a74"/></svg>
<div class="abs btn" style="left:1537px;top:6px;width:26px;height:25px;"></div>
<svg class="abs" style="left:1544px;top:12.9px" width="12" height="12" viewBox="0 0 12 12"><path d="M7.53 10.07 L7.25 11.87 L4.75 11.87 L4.47 10.07 L3.24 9.36 L1.54 10.02 L0.29 7.85 L1.71 6.71 L1.71 5.29 L0.29 4.15 L1.54 1.98 L3.24 2.64 L4.47 1.93 L4.75 0.13 L7.25 0.13 L7.53 1.93 L8.76 2.64 L10.46 1.98 L11.71 4.15 L10.29 5.29 L10.29 6.71 L11.71 7.85 L10.46 10.02 L8.76 9.36Z M6 3.75 A2.25 2.25 0 1 0 6 8.25 A2.25 2.25 0 1 0 6 3.75Z" fill="#636a74" fill-rule="evenodd" stroke="#636a74" stroke-width="0.5" stroke-linejoin="round"/></svg>
</div>
</div>
</body>
</html>
